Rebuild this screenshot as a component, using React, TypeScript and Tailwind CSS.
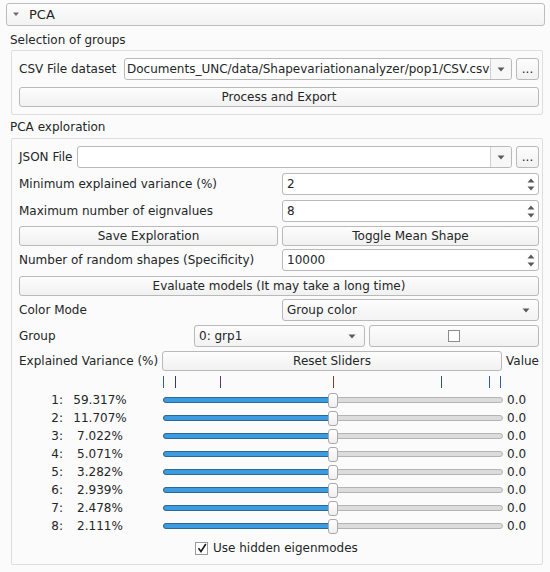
import React from "react";

const FONT = { fontFamily: '"DejaVu Sans", Verdana, sans-serif' };

function DownArrow() {
  return (
    <svg width="8" height="5" viewBox="0 0 8 5" className="shrink-0">
      <path d="M0.5 0.5 L7.5 0.5 L4 4.5 Z" fill="#5a5a5a" />
    </svg>
  );
}

function SpinArrows() {
  return (
    <div className="flex flex-col items-center gap-[3px] pr-[3px]">
      <svg width="8" height="5" viewBox="0 0 8 5">
        <path d="M0.5 4.5 L7.5 4.5 L4 0.5 Z" fill="#5a5a5a" />
      </svg>
      <svg width="8" height="5" viewBox="0 0 8 5">
        <path d="M0.5 0.5 L7.5 0.5 L4 4.5 Z" fill="#5a5a5a" />
      </svg>
    </div>
  );
}

function Button({ children, className = "" }: { children?: React.ReactNode; className?: string }) {
  return (
    <div
      className={`flex h-[20px] items-center justify-center rounded-[3px] border border-[#b9b9b9] bg-gradient-to-b from-[#fdfdfd] to-[#f1f1f1] text-[#232627] ${className}`}
    >
      {children}
    </div>
  );
}

function EditCombo({ value, className = "" }: { value: string; className?: string }) {
  return (
    <div className={`flex h-[22px] items-stretch rounded-[3px] border border-[#b9b9b9] bg-white ${className}`}>
      <div className="flex flex-1 items-center overflow-hidden whitespace-nowrap pl-[2px]">{value}</div>
      <div className="flex w-[21px] items-center justify-center rounded-r-[3px] border-l border-[#cfcfcf] bg-[#f7f7f7]">
        <DownArrow />
      </div>
    </div>
  );
}

function Combo({ value, className = "" }: { value: string; className?: string }) {
  return (
    <div
      className={`flex h-[22px] items-center justify-between rounded-[3px] border border-[#b9b9b9] bg-gradient-to-b from-[#fdfdfd] to-[#f3f3f3] pl-[4px] pr-[8px] ${className}`}
    >
      <span>{value}</span>
      <DownArrow />
    </div>
  );
}

function SpinBox({ value }: { value: string }) {
  return (
    <div className="flex h-[22px] flex-1 items-center justify-between rounded-[3px] border border-[#b9b9b9] bg-white pl-[4px]">
      <span>{value}</span>
      <SpinArrows />
    </div>
  );
}

function Slider() {
  return (
    <div className="relative flex h-[16px] w-[340px] items-center">
      <div className="h-[6px] w-full rounded-full border border-[#b4b4b4] bg-[#dcdcdc]" />
      <div className="absolute left-0 top-[5px] h-[6px] w-[168px] rounded-l-full border border-[#2c6a96] bg-[#3d9be0]" />
      <div className="absolute left-[165px] top-[1px] h-[15px] w-[10px] rounded-[3px] border border-[#a8a8a8] bg-gradient-to-b from-white to-[#efefef]" />
    </div>
  );
}

const ROWS = [
  ["1:", "59.317%"],
  ["2:", "11.707%"],
  ["3:", "7.022%"],
  ["4:", "5.071%"],
  ["5:", "3.282%"],
  ["6:", "2.939%"],
  ["7:", "2.478%"],
  ["8:", "2.111%"],
];

const TICKS: [number, string][] = [
  [0, "#2f5d9e"],
  [12, "#2a3f7a"],
  [57, "#6a2f6e"],
  [170, "#7a3f2a"],
  [278, "#2f5560"],
  [326, "#2f5d9e"],
  [337, "#2f5d9e"],
];

export default function App() {
  return (
    <div className="h-[572px] w-[550px] overflow-hidden bg-[#fbfbfb] text-[12px] leading-none text-[#232627]" style={FONT}>
      {/* collapsible header */}
      <div className="ml-[6px] mt-[3px] flex h-[23px] w-[539px] items-center rounded-[3px] border border-[#bdbdbd] bg-gradient-to-b from-[#fdfdfd] to-[#f2f2f2]">
        <svg width="8" height="5" viewBox="0 0 8 5" className="ml-[5px]">
          <path d="M1 0.5 L7 0.5 L4 4 Z" fill="#6a6a6a" />
        </svg>
        <span className="ml-[9px] text-[13px]">PCA</span>
      </div>

      <div className="ml-[10px] mt-[8px] h-[14px]">Selection of groups</div>

      {/* group box 1 */}
      <div className="ml-[11px] mt-[2px] w-[532px] rounded-[2px] border border-[#dedede] pb-[7px] pl-[7px] pr-[3px] pt-[7px]">
        <div className="flex h-[22px] items-center">
          <span className="w-[105px] shrink-0">CSV File dataset</span>
          <EditCombo value="Documents_UNC/data/Shapevariationanalyzer/pop1/CSV.csv" className="w-[388px]" />
          <Button className="ml-[4px] h-[22px] w-[23px]">...</Button>
        </div>
        <Button className="mt-[7px]">Process and Export</Button>
      </div>

      <div className="ml-[10px] mt-[6px] h-[14px]">PCA exploration</div>

      {/* group box 2 */}
      <div className="ml-[11px] mt-[3px] h-[427px] w-[532px] rounded-[2px] border border-[#dedede] pl-[7px] pr-[3px] pt-[7px]">
        <div className="flex h-[22px] items-center">
          <span className="w-[58px] shrink-0">JSON File</span>
          <EditCombo value="" className="w-[435px]" />
          <Button className="ml-[4px] h-[22px] w-[23px]">...</Button>
        </div>

        <div className="mt-[5px] flex h-[22px] items-center">
          <span className="w-[263px] shrink-0">Minimum explained variance (%)</span>
          <SpinBox value="2" />
        </div>
        <div className="mt-[5px] flex h-[22px] items-center">
          <span className="w-[263px] shrink-0">Maximum number of eignvalues</span>
          <SpinBox value="8" />
        </div>

        <div className="mt-[4px] flex gap-[4px]">
          <Button className="w-[259px]">Save Exploration</Button>
          <Button className="flex-1">Toggle Mean Shape</Button>
        </div>

        <div className="mt-[3px] flex h-[22px] items-center">
          <span className="w-[263px] shrink-0">Number of random shapes (Specificity)</span>
          <SpinBox value="10000" />
        </div>

        <Button className="mt-[5px]">Evaluate models (It may take a long time)</Button>

        <div className="mt-[3px] flex h-[22px] items-center">
          <span className="w-[263px] shrink-0">Color Mode</span>
          <Combo value="Group color" className="flex-1" />
        </div>

        <div className="mt-[4px] flex h-[22px] items-center">
          <span className="w-[175px] shrink-0">Group</span>
          <Combo value="0: grp1" className="w-[171px]" />
          <Button className="ml-[4px] h-[22px] flex-1">
            <div className="h-[12px] w-[12px] border border-[#8c8c8c] bg-white" />
          </Button>
        </div>

        <div className="mt-[4px] flex h-[20px] items-center">
          <span className="w-[143px] shrink-0">Explained Variance (%)</span>
          <Button className="w-[341px]">Reset Sliders</Button>
          <span className="ml-[4px]">Value</span>
        </div>

        {/* tick marks */}
        <div className="relative ml-[144px] mt-[5px] h-[12px] w-[340px]">
          {TICKS.map(([x, c], i) => (
            <div key={i} className="absolute top-0 h-[12px] w-[1px]" style={{ left: x, background: c }} />
          ))}
        </div>

        <div className="mt-[3px] flex flex-col">
          {ROWS.map(([n, p]) => (
            <div key={n} className="flex h-[18px] items-center">
              <span className="w-[44px] text-right">{n}</span>
              <span className="w-[74px] text-center">{p}</span>
              <div className="ml-[26px]">
                <Slider />
              </div>
              <span className="ml-[4px]">0.0</span>
            </div>
          ))}
        </div>

        <div className="ml-[176px] mt-[5px] flex h-[16px] items-center">
          <div className="flex h-[13px] w-[13px] items-center justify-center border border-[#9a9a9a] bg-white">
            <svg width="10" height="10" viewBox="0 0 10 10">
              <path d="M1.5 5.2 L4 8.5 L8.8 1" fill="none" stroke="#1e1e1e" strokeWidth="1.6" />
            </svg>
          </div>
          <span className="ml-[5px]">Use hidden eigenmodes</span>
        </div>
      </div>
    </div>
  );
}
